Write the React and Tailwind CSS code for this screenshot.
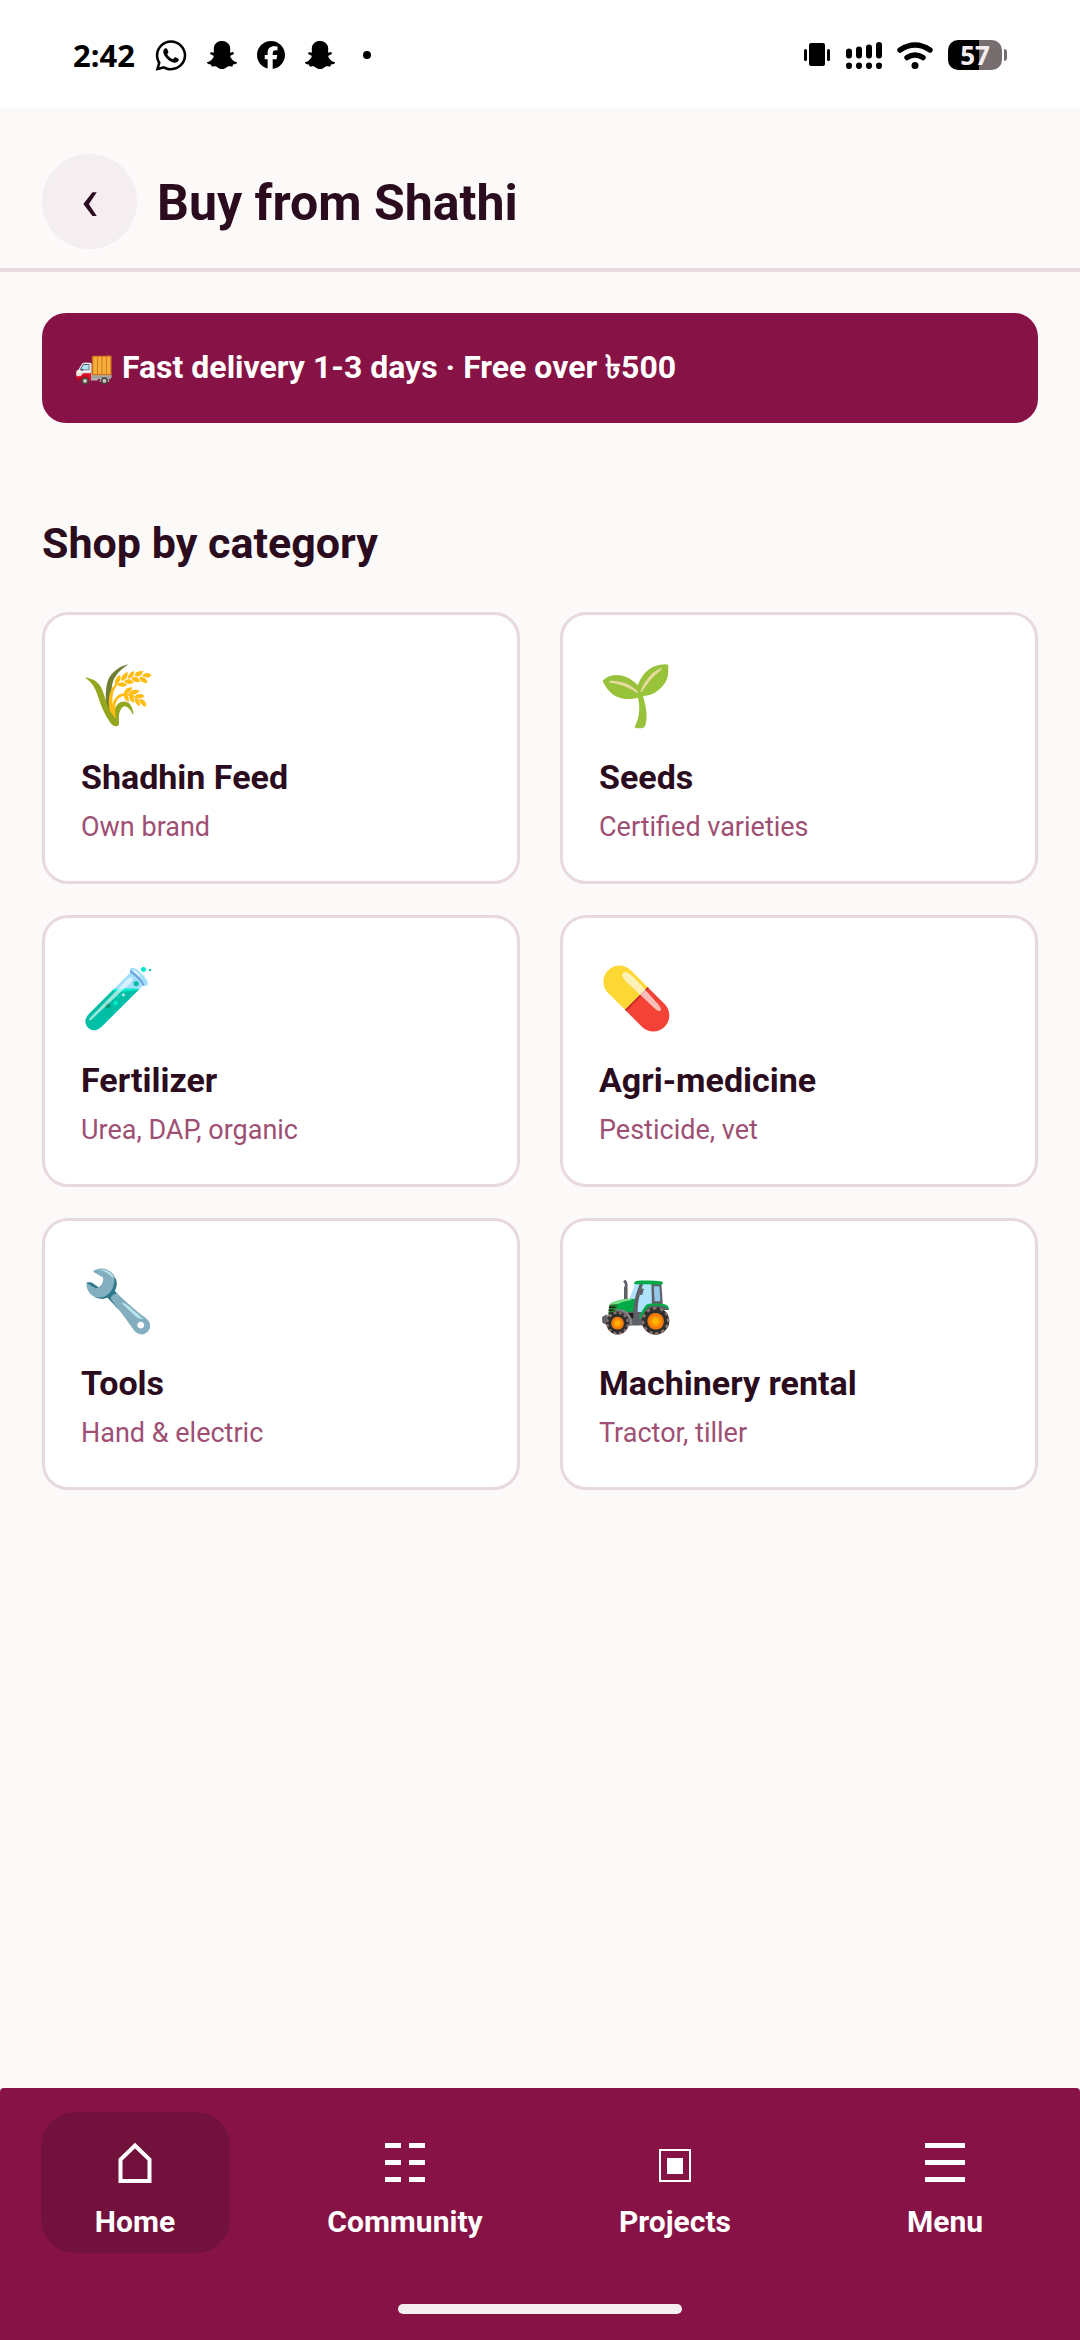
import { useState } from 'react'
import { FaWhatsapp, FaSnapchatGhost } from 'react-icons/fa'
import { FaFacebook } from 'react-icons/fa6'

const categories = [
  { emoji: '🌾', name: 'Shadhin Feed', note: 'Own brand' },
  { emoji: '🌱', name: 'Seeds', note: 'Certified varieties' },
  { emoji: '🧪', name: 'Fertilizer', note: 'Urea, DAP, organic' },
  { emoji: '💊', name: 'Agri-medicine', note: 'Pesticide, vet' },
  { emoji: '🔧', name: 'Tools', note: 'Hand & electric' },
  { emoji: '🚜', name: 'Machinery rental', note: 'Tractor, tiller' },
]

const HomeIcon = () => (
  <svg viewBox="0 0 42 42" className="w-[42px] h-[42px]" fill="none" stroke="currentColor" strokeWidth="4">
    <path d="M6.500 39V17.500L21 3.500l14.500 14V39z" />
  </svg>
)

const CommunityIcon = () => (
  <svg viewBox="0 0 42 42" className="w-[42px] h-[42px]" fill="currentColor">
    <path d="M1 1h16v5H1zM25 1h16v5H25zM1 18h16v5H1zM25 18h16v5H25zM1 35h16v5H1zM25 35h16v5H25z" />
  </svg>
)

const ProjectsIcon = () => (
  <svg viewBox="0 0 42 42" className="w-[42px] h-[42px]">
    <rect x="6" y="8" width="30" height="31" fill="none" stroke="currentColor" strokeWidth="2" />
    <rect x="13" y="16" width="16" height="16" fill="currentColor" />
  </svg>
)

const MenuIcon = () => (
  <svg viewBox="0 0 42 42" className="w-[42px] h-[42px]" fill="currentColor">
    <path d="M1 1h40v5H1zM1 18h40v5H1zM1 35h40v5H1z" />
  </svg>
)

const tabs = [
  { label: 'Home', icon: HomeIcon },
  { label: 'Community', icon: CommunityIcon },
  { label: 'Projects', icon: ProjectsIcon },
  { label: 'Menu', icon: MenuIcon },
]

const StatusBar = () => (
  <div className="flex items-center justify-between h-[108px] pt-0.5 px-[73px] bg-white text-black">
    <div className="flex items-center gap-5">
      <span className="font-['Noto_Sans',sans-serif] font-bold text-[31px] leading-none">2:42</span>
      <FaWhatsapp className="w-8 h-[35px]" />
      <FaSnapchatGhost className="w-[30px] h-[30px]" />
      <FaFacebook className="w-7 h-7" />
      <FaSnapchatGhost className="w-[30px] h-[30px]" />
      <span className="w-2 h-2 ml-2 rounded-full bg-black" />
    </div>
    <div className="flex items-center gap-[15px]">
      <svg viewBox="0 0 28 24" className="w-7 h-6">
        <rect x="6" y="0" width="16" height="23" rx="2" />
        <rect x="1" y="6" width="3" height="12" rx="1.500" />
        <rect x="24" y="6" width="3" height="12" rx="1.500" />
      </svg>
      <svg viewBox="0 0 36 28" className="w-9 h-7" strokeWidth="6" strokeLinecap="round" stroke="black">
        <path d="M3 10.500v4M13 8.500v6M23 6.500v8M33 4v10.500M3 24.500v.6M13 24.500v.6M23 24.500v.6M33 24.500v.6" />
      </svg>
      <svg viewBox="0 0 36 28" className="w-9 h-7" fill="none" stroke="black" strokeWidth="5.500" strokeLinecap="round">
        <path d="M3 9Q18-1 33 9M10 16.500Q18 11.500 26 16.500" />
        <circle cx="18" cy="24.500" r="3.500" fill="black" stroke="none" />
      </svg>
      <div className="flex items-center gap-0.5">
        <div className="flex items-center justify-center w-[54px] h-[30px] rounded-[10px] bg-linear-to-r from-black from-57% to-[#766d6f] to-57% text-[#f5eef1] font-['Noto_Sans',sans-serif] font-bold text-[26px] leading-none">
          57
        </div>
        <span className="w-[3px] h-3 rounded-r-full bg-[#766d6f]" />
      </div>
    </div>
  </div>
)

const CategoryCard = ({ emoji, name, note }) => (
  <button
    type="button"
    className="flex flex-col items-start px-9 pt-[42px] pb-9 rounded-[26px] border-3 border-[#e8d9e0] bg-white text-left"
  >
    <span className="text-[60px] leading-[78px]">{emoji}</span>
    <span className="mt-[22px] text-[34px] leading-10 font-bold text-[#2b0b1e]">{name}</span>
    <span className="mt-3 text-[27px] leading-9 text-[#9e4f73]">{note}</span>
  </button>
)

const App = () => {
  const [active, setActive] = useState('Home')

  return (
    <div className="flex flex-col min-h-screen bg-[#fbfaf8] font-[Roboto,'Noto_Sans',sans-serif] text-[#2b0b1e]">
      <StatusBar />

      <header className="flex items-center gap-5 px-[42px] pt-[46px] pb-[19px] border-b-4 border-[#e8d9e0]">
        <button
          type="button"
          aria-label="Back"
          className="flex items-center justify-center w-[95px] h-[95px] pb-1 rounded-full bg-[#f5eef1] text-[62px] leading-none"
        >
          ‹
        </button>
        <h1 className="pt-0.5 text-[50px] leading-[60px] font-bold">Buy from Shathi</h1>
      </header>

      <main className="flex-1 px-[42px] pt-[41px]">
        <div className="px-8 pt-[35px] pb-[37px] rounded-[24px] bg-[#871346] text-white text-[32px] leading-[38px] font-bold">
          🚚 Fast delivery 1-3 days · Free over ৳500
        </div>

        <h2 className="mt-[95px] mb-11 text-[43px] leading-[50px] font-bold">Shop by category</h2>

        <div className="grid grid-cols-2 gap-x-10 gap-y-[31px]">
          {categories.map((category) => (
            <CategoryCard key={category.name} {...category} />
          ))}
        </div>
      </main>

      <nav className="pt-6 pb-[26px] rounded-t bg-[#871346] text-white">
        <div className="grid grid-cols-4">
          {tabs.map(({ label, icon: Icon }) => (
            <button
              key={label}
              type="button"
              onClick={() => setActive(label)}
              className={`flex flex-col items-center justify-self-center w-[189px] pt-[30px] pb-[13px] rounded-[34px] ${
                active === label ? 'bg-[#73113d]' : ''
              }`}
            >
              <Icon />
              <span className="mt-5 text-[30px] leading-9 font-bold">{label}</span>
            </button>
          ))}
        </div>
        {/* Gesture bar */}
        <div className="w-[284px] h-2.5 mt-[51px] mx-auto rounded-full bg-[#f5eef1]" />
      </nav>
    </div>
  )
}

export default App
